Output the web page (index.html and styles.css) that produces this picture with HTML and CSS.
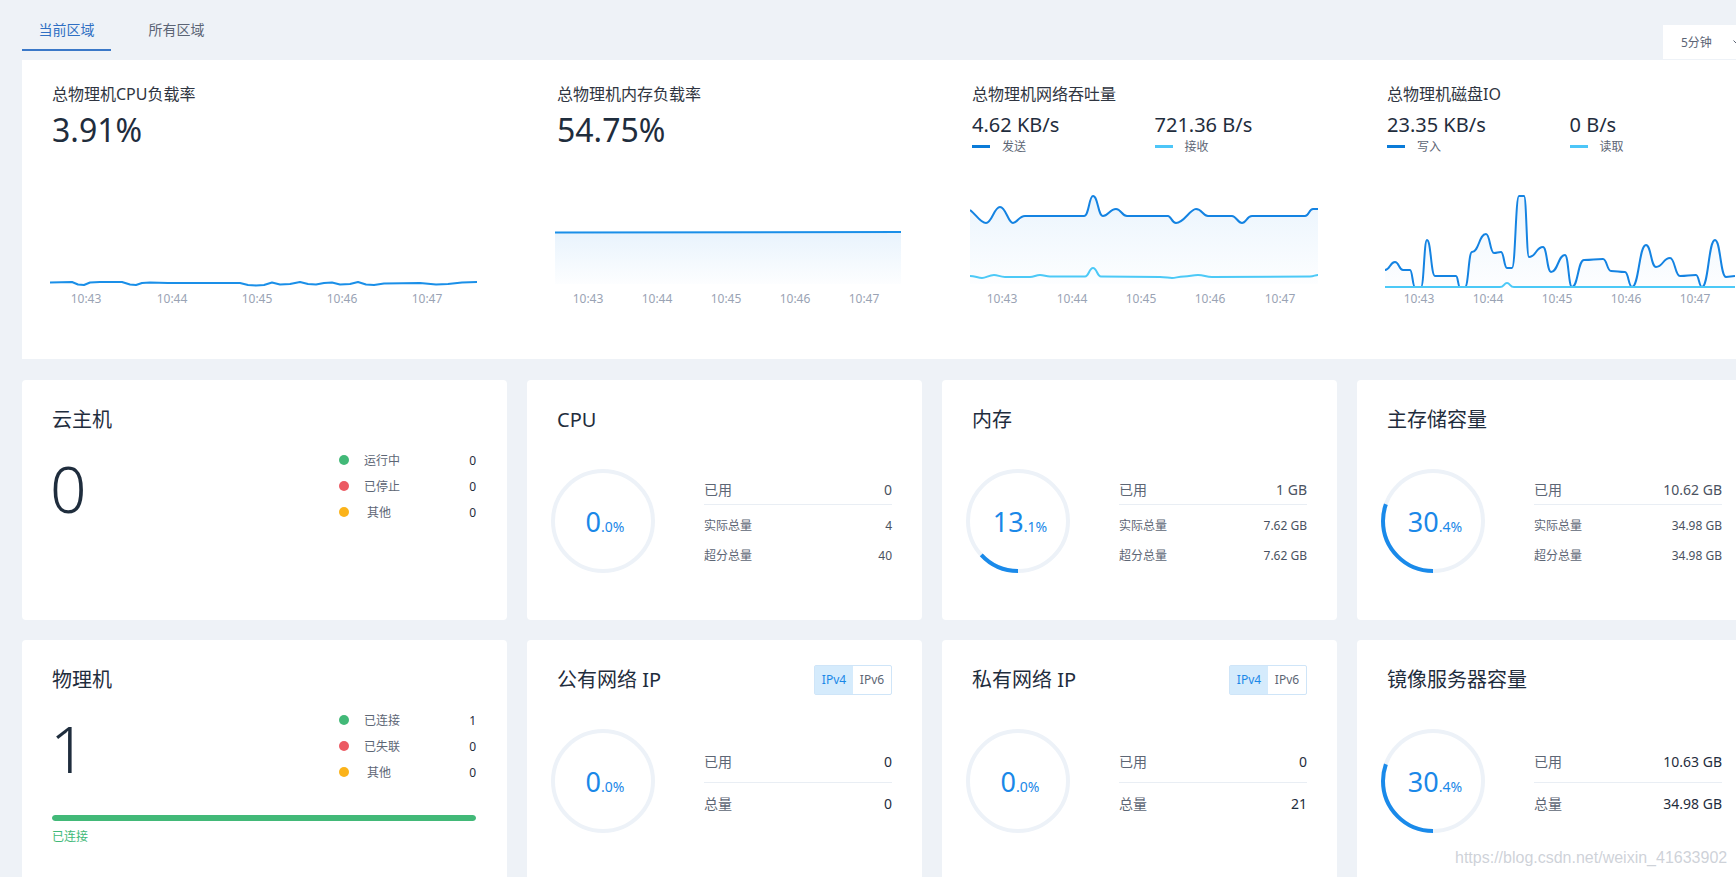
FILE: index.html
```html
<!DOCTYPE html>
<html lang="zh-CN">
<head>
<meta charset="utf-8">
<title>资源概览</title>
<link rel="stylesheet" href="styles.css">
</head>
<body>
<div class="page">
  <header class="topbar">
    <nav class="tabs">
      <div class="tab active">当前区域</div>
      <div class="tab">所有区域</div>
    </nav>
    <div class="range">
      <span>5分钟</span>
      <svg class="chev" width="8" height="5" viewBox="0 0 8 5"><path d="M0.5 0.5 L4 4 L7.5 0.5" fill="none" stroke="#5b6475" stroke-width="1"/></svg>
    </div>
  </header>

  <section class="monitor">
    <div class="metric">
      <div class="metric-title">总物理机CPU负载率</div>
      <div class="metric-value">3.91%</div>
      <svg class="chart" width="427" height="150" viewBox="0 0 427 150">
        <polyline fill="none" stroke="#1a8fe8" stroke-width="2" stroke-linejoin="round" points="0,122.5 22,122 28,124.5 34,125 40,122.5 50,122 72,122 80,124.5 86,125 92,123 100,122.5 118,123 190,123 198,125 206,125.5 214,125 222,122.5 230,124.5 240,124 250,122 258,124 266,124.5 274,123 282,122.5 290,124.5 300,124 308,122 316,124.5 324,125 334,123.5 370,123 386,124.5 398,124 412,122.5 427,122"/>
        <g class="axis" text-anchor="middle">
          <text x="36" y="143">10:43</text><text x="122" y="143">10:44</text><text x="207" y="143">10:45</text><text x="292" y="143">10:46</text><text x="377" y="143">10:47</text>
        </g>
      </svg>
    </div>

    <div class="metric">
      <div class="metric-title">总物理机内存负载率</div>
      <div class="metric-value">54.75%</div>
      <svg class="chart" width="346" height="150" viewBox="0 0 346 150">
        <defs>
          <linearGradient id="gm" x1="0" y1="0" x2="0" y2="1">
            <stop offset="0" stop-color="#1a88e8" stop-opacity="0.10"/>
            <stop offset="1" stop-color="#1a88e8" stop-opacity="0.01"/>
          </linearGradient>
        </defs>
        <path d="M0,72.5 L346,72 L346,124 L0,124 Z" fill="url(#gm)"/>
        <path d="M0,72.5 L346,72" fill="none" stroke="#1a8fe8" stroke-width="2"/>
        <g class="axis" text-anchor="middle">
          <text x="33" y="143">10:43</text><text x="102" y="143">10:44</text><text x="171" y="143">10:45</text><text x="240" y="143">10:46</text><text x="309" y="143">10:47</text>
        </g>
      </svg>
    </div>

    <div class="metric">
      <div class="metric-title">总物理机网络吞吐量</div>
      <div class="dual">
        <div class="dual-item">
          <div class="dual-value">4.62 KB/s</div>
          <div class="dual-legend"><i class="lbar dark"></i>发送</div>
        </div>
        <div class="dual-item">
          <div class="dual-value">721.36 B/s</div>
          <div class="dual-legend"><i class="lbar light"></i>接收</div>
        </div>
      </div>
      <svg class="chart dual-chart" width="348" height="150" viewBox="0 0 348 150">
        <defs>
          <linearGradient id="gn" x1="0" y1="0" x2="0" y2="1">
            <stop offset="0" stop-color="#1a88e8" stop-opacity="0.09"/>
            <stop offset="1" stop-color="#1a88e8" stop-opacity="0.01"/>
          </linearGradient>
        </defs>
        <path d="M0,50 C6,54 10,63 16,63 C22,63 24,47 30,47 C36,47 38,63 43,63 C47,63 49,56 55,56 L114,56 C119,56 119,36 123,36 C128,36 128,56 133,56 C138,56 140,49 146,49 C151,49 152,56 157,56 L198,56 C201,56 202,63 206,63 C214,63 220,49 226,49 C232,49 233,56 238,56 L262,56 C266,56 268,63 272,63 C276,63 277,56 282,56 L335,56 C339,56 339,49 343,49 L348,49 L348,124 L0,124 Z" fill="url(#gn)"/>
        <path d="M0,50 C6,54 10,63 16,63 C22,63 24,47 30,47 C36,47 38,63 43,63 C47,63 49,56 55,56 L114,56 C119,56 119,36 123,36 C128,36 128,56 133,56 C138,56 140,49 146,49 C151,49 152,56 157,56 L198,56 C201,56 202,63 206,63 C214,63 220,49 226,49 C232,49 233,56 238,56 L262,56 C266,56 268,63 272,63 C276,63 277,56 282,56 L335,56 C339,56 339,49 343,49 L348,49" fill="none" stroke="#1483e2" stroke-width="2"/>
        <path d="M0,116 C5,116 8,118 12,118 C16,118 19,115 24,115 C28,115 30,117 35,117 L60,117 C64,117 66,115 70,115 C74,115 76,116.5 80,116.5 L115,116.5 C119,116.5 119,108 123,108 C127,108 127,116.5 131,116.5 L190,117 C196,117 198,118 202,118 C206,118 208,116.5 214,116.5 C220,116.5 222,115 228,115 C234,115 236,117 242,117 L340,116.5 C344,116.5 345,115 348,115" fill="none" stroke="#4cc9f7" stroke-width="2"/>
        <g class="axis" text-anchor="middle">
          <text x="32" y="143">10:43</text><text x="102" y="143">10:44</text><text x="171" y="143">10:45</text><text x="240" y="143">10:46</text><text x="310" y="143">10:47</text>
        </g>
      </svg>
    </div>

    <div class="metric">
      <div class="metric-title">总物理机磁盘IO</div>
      <div class="dual">
        <div class="dual-item">
          <div class="dual-value">23.35 KB/s</div>
          <div class="dual-legend"><i class="lbar dark"></i>写入</div>
        </div>
        <div class="dual-item">
          <div class="dual-value">0 B/s</div>
          <div class="dual-legend"><i class="lbar light"></i>读取</div>
        </div>
      </div>
      <svg class="chart dual-chart" width="350" height="150" viewBox="0 0 350 150">
        <defs>
          <linearGradient id="gd" x1="0" y1="0" x2="0" y2="1">
            <stop offset="0" stop-color="#1a88e8" stop-opacity="0.08"/>
            <stop offset="1" stop-color="#1a88e8" stop-opacity="0.01"/>
          </linearGradient>
        </defs>
        <path d="M0,110 C5,110 5,102 10,102 C14,102 14,110 18,110 L25,110 C27.5,110 27.5,127 30,127 L36,127 C39,127 39,80 42,80 C46,80 46,116 50,116 L71,116 C73,116 73,127 75,127 L80,127 C83.5,127 83.5,92 87,92 C94,92 94,74 101,74 C105,74 105,93 109,93 C112.5,93 112.5,92 116,92 C119,92 119,108 122,108 L127,108 C130.5,108 130.5,36 134,36 L139,36 C141.5,36 141.5,97 144,97 C151,97 151,87 158,87 C162,87 162,112 166,112 C173,112 173,95 180,95 C183.5,95 183.5,127 187,127 C193,127 193,100 199,100 C208.5,100 208.5,99 218,99 C222,99 222,111 226,111 C233,111 233,112 240,112 C243.5,112 243.5,127 247,127 C254,127 254,85 261,85 C266,85 266,107 271,107 C278,107 278,98 285,98 C290,98 290,116 295,116 C303,116 303,115 311,115 C314,115 314,127 317,127 C323.5,127 323.5,80 330,80 C335.5,80 335.5,117 341,117 L350,116 L350,127 L0,127 Z" fill="url(#gd)"/>
        <path d="M0,110 C5,110 5,102 10,102 C14,102 14,110 18,110 L25,110 C27.5,110 27.5,127 30,127 L36,127 C39,127 39,80 42,80 C46,80 46,116 50,116 L71,116 C73,116 73,127 75,127 L80,127 C83.5,127 83.5,92 87,92 C94,92 94,74 101,74 C105,74 105,93 109,93 C112.5,93 112.5,92 116,92 C119,92 119,108 122,108 L127,108 C130.5,108 130.5,36 134,36 L139,36 C141.5,36 141.5,97 144,97 C151,97 151,87 158,87 C162,87 162,112 166,112 C173,112 173,95 180,95 C183.5,95 183.5,127 187,127 C193,127 193,100 199,100 C208.5,100 208.5,99 218,99 C222,99 222,111 226,111 C233,111 233,112 240,112 C243.5,112 243.5,127 247,127 C254,127 254,85 261,85 C266,85 266,107 271,107 C278,107 278,98 285,98 C290,98 290,116 295,116 C303,116 303,115 311,115 C314,115 314,127 317,127 C323.5,127 323.5,80 330,80 C335.5,80 335.5,117 341,117 L350,116" fill="none" stroke="#1483e2" stroke-width="2"/>
        <path d="M0,127 L115,127 C119,127 119,123 122,123 C125,123 125,127 129,127 L350,127" fill="none" stroke="#4cc9f7" stroke-width="2"/>
        <g class="axis" text-anchor="middle">
          <text x="34" y="143">10:43</text><text x="103" y="143">10:44</text><text x="172" y="143">10:45</text><text x="241" y="143">10:46</text><text x="310" y="143">10:47</text>
        </g>
      </svg>
    </div>
  </section>

  <section class="cards">
    <!-- Row 1 -->
    <div class="card count-card">
      <div class="card-title">云主机</div>
      <div class="count-body">
        <div class="count-num">0</div>
        <div class="legend">
          <div class="legend-row"><i class="dot green"></i><span class="legend-label">运行中</span><span class="legend-val">0</span></div>
          <div class="legend-row"><i class="dot red"></i><span class="legend-label">已停止</span><span class="legend-val">0</span></div>
          <div class="legend-row"><i class="dot yellow"></i><span class="legend-label">&nbsp;其他</span><span class="legend-val">0</span></div>
        </div>
      </div>
    </div>

    <div class="card ring-card">
      <div class="card-head"><div class="card-title">CPU</div></div>
      <div class="ring-body">
        <div class="ring">
          <svg width="104" height="104" viewBox="0 0 104 104"><circle cx="52" cy="52" r="50" fill="none" stroke="#edf2f8" stroke-width="4"/></svg>
          <div class="pct"><span class="pct-int">0</span><span class="pct-dec">.0%</span></div>
        </div>
        <div class="stats three">
          <div class="stat-row main"><span>已用</span><span class="v">0</span></div>
          <div class="stat-row sub"><span>实际总量</span><span class="v">4</span></div>
          <div class="stat-row sub last"><span>超分总量</span><span class="v">40</span></div>
        </div>
      </div>
    </div>

    <div class="card ring-card">
      <div class="card-head"><div class="card-title">内存</div></div>
      <div class="ring-body">
        <div class="ring">
          <svg width="104" height="104" viewBox="0 0 104 104"><circle cx="52" cy="52" r="50" fill="none" stroke="#edf2f8" stroke-width="4"/><circle cx="52" cy="52" r="50" fill="none" stroke="#1a8aea" stroke-width="4" stroke-dasharray="41.2 400" transform="rotate(90 52 52)"/></svg>
          <div class="pct"><span class="pct-int">13</span><span class="pct-dec">.1%</span></div>
        </div>
        <div class="stats three">
          <div class="stat-row main"><span>已用</span><span class="v">1 GB</span></div>
          <div class="stat-row sub"><span>实际总量</span><span class="v">7.62 GB</span></div>
          <div class="stat-row sub last"><span>超分总量</span><span class="v">7.62 GB</span></div>
        </div>
      </div>
    </div>

    <div class="card ring-card">
      <div class="card-head"><div class="card-title">主存储容量</div></div>
      <div class="ring-body">
        <div class="ring">
          <svg width="104" height="104" viewBox="0 0 104 104"><circle cx="52" cy="52" r="50" fill="none" stroke="#edf2f8" stroke-width="4"/><circle cx="52" cy="52" r="50" fill="none" stroke="#1a8aea" stroke-width="4" stroke-dasharray="95.5 400" transform="rotate(90 52 52)"/></svg>
          <div class="pct"><span class="pct-int">30</span><span class="pct-dec">.4%</span></div>
        </div>
        <div class="stats three">
          <div class="stat-row main"><span>已用</span><span class="v">10.62 GB</span></div>
          <div class="stat-row sub"><span>实际总量</span><span class="v">34.98 GB</span></div>
          <div class="stat-row sub last"><span>超分总量</span><span class="v">34.98 GB</span></div>
        </div>
      </div>
    </div>

    <!-- Row 2 -->
    <div class="card count-card">
      <div class="card-title">物理机</div>
      <div class="count-body">
        <div class="count-num">1</div>
        <div class="legend">
          <div class="legend-row"><i class="dot green"></i><span class="legend-label">已连接</span><span class="legend-val">1</span></div>
          <div class="legend-row"><i class="dot red"></i><span class="legend-label">已失联</span><span class="legend-val">0</span></div>
          <div class="legend-row"><i class="dot yellow"></i><span class="legend-label">&nbsp;其他</span><span class="legend-val">0</span></div>
        </div>
      </div>
      <div class="bar-track"><div class="bar-fill" style="width:100%"></div></div>
      <div class="bar-label">已连接</div>
    </div>

    <div class="card ring-card">
      <div class="card-head">
        <div class="card-title">公有网络 IP</div>
        <div class="seg"><span class="on">IPv4</span><span>IPv6</span></div>
      </div>
      <div class="ring-body">
        <div class="ring">
          <svg width="104" height="104" viewBox="0 0 104 104"><circle cx="52" cy="52" r="50" fill="none" stroke="#edf2f8" stroke-width="4"/></svg>
          <div class="pct"><span class="pct-int">0</span><span class="pct-dec">.0%</span></div>
        </div>
        <div class="stats two">
          <div class="stat-row main"><span>已用</span><span class="v">0</span></div>
          <div class="stat-row sub big"><span>总量</span><span class="v">0</span></div>
        </div>
      </div>
    </div>

    <div class="card ring-card">
      <div class="card-head">
        <div class="card-title">私有网络 IP</div>
        <div class="seg"><span class="on">IPv4</span><span>IPv6</span></div>
      </div>
      <div class="ring-body">
        <div class="ring">
          <svg width="104" height="104" viewBox="0 0 104 104"><circle cx="52" cy="52" r="50" fill="none" stroke="#edf2f8" stroke-width="4"/></svg>
          <div class="pct"><span class="pct-int">0</span><span class="pct-dec">.0%</span></div>
        </div>
        <div class="stats two">
          <div class="stat-row main"><span>已用</span><span class="v">0</span></div>
          <div class="stat-row sub big"><span>总量</span><span class="v">21</span></div>
        </div>
      </div>
    </div>

    <div class="card ring-card">
      <div class="card-head"><div class="card-title">镜像服务器容量</div></div>
      <div class="ring-body">
        <div class="ring">
          <svg width="104" height="104" viewBox="0 0 104 104"><circle cx="52" cy="52" r="50" fill="none" stroke="#edf2f8" stroke-width="4"/><circle cx="52" cy="52" r="50" fill="none" stroke="#1a8aea" stroke-width="4" stroke-dasharray="95.5 400" transform="rotate(90 52 52)"/></svg>
          <div class="pct"><span class="pct-int">30</span><span class="pct-dec">.4%</span></div>
        </div>
        <div class="stats two">
          <div class="stat-row main"><span>已用</span><span class="v">10.63 GB</span></div>
          <div class="stat-row sub big"><span>总量</span><span class="v">34.98 GB</span></div>
        </div>
      </div>
    </div>
  </section>
</div>
<div class="watermark">https://blog.csdn.net/weixin_41633902</div>
</body>
</html>
```

FILE: styles.css
```css
html, body {
  margin: 0;
  padding: 0;
  overflow: hidden;
}
body {
  background: #eef2f7;
  font-family: "Noto Sans", "Noto Sans CJK SC", sans-serif;
  color: #1f2d3d;
  position: relative;
  height: 877px;
}
.page {
  width: 1730px;
  padding-left: 22px;
}

/* top bar */
.topbar {
  height: 60px;
  display: flex;
  justify-content: space-between;
}
.tabs {
  display: flex;
  gap: 21px;
}
.tab {
  width: 89px;
  height: 29px;
  padding-top: 20px;
  line-height: 20px;
  text-align: center;
  font-size: 14px;
  color: #5b6475;
}
.tab.active {
  color: #2f6fc3;
  border-bottom: 2px solid #3a78c8;
}
.range {
  align-self: flex-end;
  margin-bottom: 1px;
  width: 89px;
  height: 34px;
  box-sizing: border-box;
  padding-left: 18px;
  background: #fff;
  display: flex;
  align-items: center;
  font-size: 12px;
  color: #5b6475;
}
.chev {
  margin-left: 21px;
}

/* monitor card */
.monitor {
  background: #fff;
  height: 299px;
  display: grid;
  grid-template-columns: 485px 395px 395px 395px;
  column-gap: 20px;
  margin-bottom: 21px;
}
.metric {
  padding: 24px 0 0 28px;
}
.metric-title {
  margin-left: 2px;
  font-size: 16px;
  line-height: 20px;
  color: #2f3541;
}
.metric-value {
  margin: 6px 0 0 2px;
  font-size: 32px;
  line-height: 40px;
  color: #1f2d3d;
}
.chart {
  display: block;
  margin-top: 10px;
}
.chart.dual-chart {
  margin-top: 6px;
}
.axis text {
  font-size: 12px;
  fill: #9aa3b4;
  font-family: "Noto Sans", sans-serif;
}
.dual {
  display: flex;
  margin: 8px 0 0 2px;
}
.dual-item {
  width: 183px;
}
.dual-value {
  font-size: 20px;
  line-height: 26px;
  color: #1f2d3d;
}
.dual-legend {
  display: flex;
  align-items: center;
  height: 16px;
  font-size: 12px;
  color: #5d6675;
}
.lbar {
  width: 18px;
  height: 3px;
  margin-right: 12px;
}
.lbar.dark { background: #0a7bd8; }
.lbar.light { background: #4dc6f8; }

/* cards */
.cards {
  display: grid;
  grid-template-columns: 485px 395px 395px 395px;
  grid-auto-rows: 240px;
  gap: 20px;
}
.card {
  background: #fff;
  border-radius: 4px;
  box-sizing: border-box;
  padding-top: 26px;
}
.card-title {
  font-size: 20px;
  line-height: 28px;
  color: #1f2d3d;
}

/* count cards */
.count-card {
  padding: 26px 31px 0 30px;
}
.count-body {
  display: flex;
  align-items: flex-start;
  margin-top: 13px;
}
.count-num {
  font-size: 64px;
  line-height: 84px;
  font-weight: 300;
  color: #1f2d3d;
  margin-left: -2px;
}
.legend {
  margin-left: auto;
  width: 137px;
}
.legend-row {
  display: flex;
  align-items: center;
  height: 26px;
  font-size: 12px;
}
.dot {
  width: 10px;
  height: 10px;
  border-radius: 50%;
  margin-right: 15px;
}
.dot.green { background: #42b978; }
.dot.red { background: #ec5a63; }
.dot.yellow { background: #fbb31a; }
.legend-label {
  flex: 1;
  color: #5d6675;
}
.legend-val {
  color: #1f2d3d;
}
.bar-track {
  margin-top: 24px;
  height: 6px;
  border-radius: 3px;
  background: #e9eef4;
  overflow: hidden;
}
.bar-fill {
  height: 100%;
  background: #42b978;
  border-radius: 3px;
}
.bar-label {
  margin-top: 6px;
  font-size: 12px;
  line-height: 20px;
  color: #42b978;
}

/* ring cards */
.card-head {
  display: flex;
  justify-content: space-between;
  align-items: center;
  height: 28px;
  padding: 0 30px 0 30px;
}
.seg {
  display: flex;
  height: 30px;
  border: 1px solid #cfe5f8;
  border-radius: 2px;
  box-sizing: border-box;
}
.seg span {
  width: 38px;
  text-align: center;
  line-height: 28px;
  font-size: 12px;
  color: #5d6675;
}
.seg span.on {
  background: #d5ebfc;
  color: #1a88e8;
}
.ring-body {
  display: flex;
  align-items: center;
  margin-top: 35px;
  padding: 0 30px 0 24px;
}
.ring {
  width: 104px;
  height: 104px;
  display: grid;
  place-items: center;
}
.ring > * {
  grid-area: 1 / 1;
}
.ring svg {
  display: block;
}
.pct {
  color: #1a88e8;
  white-space: nowrap;
  margin-left: 4px;
}
.pct-int {
  font-size: 27px;
}
.pct-dec {
  font-size: 14px;
}
.stats {
  flex: 1;
  margin-left: 49px;
  padding-top: 3px;
}
.stat-row {
  display: flex;
  justify-content: space-between;
  color: #5d6675;
}
.stat-row.main {
  font-size: 14px;
  line-height: 22px;
  border-bottom: 1px solid #e9eef4;
}
.stats.three .stat-row.main { padding-bottom: 3px; }
.stats.three .stat-row.sub {
  font-size: 12px;
  line-height: 20px;
  padding-top: 11px;
}
.stats.three .stat-row.sub.last { padding-top: 10px; }
.stats.three .v { color: #4a5261; }
.stats.two .stat-row.main { padding-bottom: 9px; }
.stats.two .stat-row.big {
  font-size: 14px;
  line-height: 22px;
  padding-top: 10px;
}
.stats.two .v { color: #1f2d3d; }

.watermark {
  position: absolute;
  left: 1455px;
  top: 848px;
  font-family: "Liberation Sans", Arial, sans-serif;
  font-size: 16px;
  line-height: 20px;
  color: rgba(190, 195, 204, 0.75);
  white-space: nowrap;
}
```
